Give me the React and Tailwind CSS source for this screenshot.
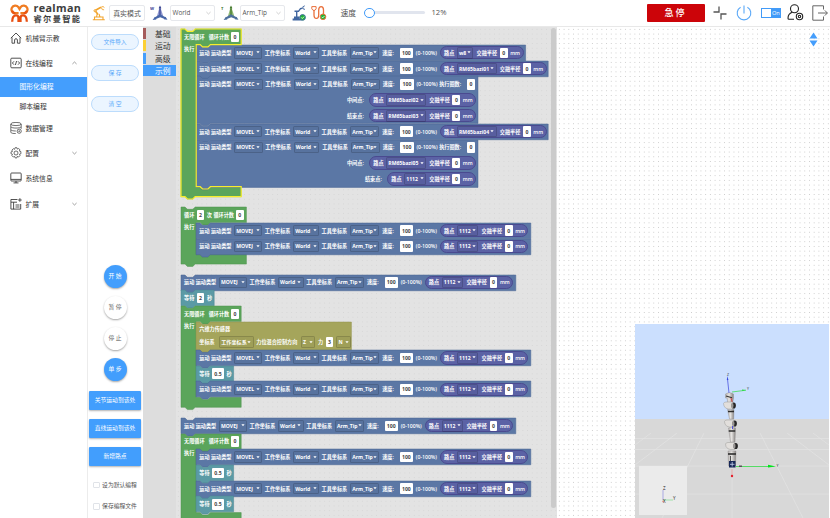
import React from "react";

const BLUE = "#5b77a5";
const GREEN = "#5ba55b";
const TEAL = "#5b9aa5";
const OLIVE = "#a5a55b";
const EDGE = { [BLUE]: "#486592", [GREEN]: "#4c924c", [TEAL]: "#4a8791", [OLIVE]: "#92924c" };
const ROW = 15.75;

const DIP = "l2.4 2.3h5.4l2.4 -2.3";
const DIP_BACK = "l-2.4 2.3h-5.4l-2.4 -2.3";

function Silhouette({ d, color, w, h }) {
  return (
    <svg className="absolute left-0 top-0 overflow-visible" width={w} height={h}>
      <path d={d} fill={color} stroke={EDGE[color]} strokeWidth="0.5" />
    </svg>
  );
}

/* ---- block fields ---- */
function T({ w, children }) {
  return <span className="block shrink-0 whitespace-nowrap" style={{ width: w }}>{children}</span>;
}
function Drop({ w, mr = 2.7, children }) {
  return (
    <span className="flex h-[11.5px] shrink-0 items-center justify-between rounded-[1.5px] border-[0.5px] border-black/15 bg-black/[0.03] pl-[1.2px] pr-[1.2px] text-[5.1px] font-bold" style={{ width: w, marginRight: mr }}>
      <span className="whitespace-nowrap">{children}</span>
      <svg className="shrink-0" width="4" height="3" viewBox="0 0 4 3"><path d="M.4 .3h3.2L2 2.3z" fill="#fff" /></svg>
    </span>
  );
}
function Num({ w = 7.6, mr = 2.6, children }) {
  return (
    <span className="flex h-[10.5px] shrink-0 items-center justify-center rounded-[1px] bg-white font-bold text-[#444]" style={{ width: w, marginRight: mr }}>
      {children}
    </span>
  );
}
function Point({ name, w, dw }) {
  return (
    <span className="flex h-[13.4px] shrink-0 items-center rounded-full border-[0.5px] border-[#4a4a90] bg-[#5b62a5] pl-[2.8px]" style={{ width: w }}>
      <T w={12.8}>路点</T>
      <Drop w={dw} mr={3.2}>{name}</Drop>
      <T w={23.2}>交融半径</T>
      <Num w={7.8} mr={2.6}>0</Num>
      <T w={10}>mm</T>
    </span>
  );
}

/* ---- blocks ---- */
function Statement({ w, h = ROW, color = BLUE, children }) {
  const d = `M0 0h4${DIP}H${w}V${h}H14.2${DIP_BACK}H0z`;
  return (
    <div className="relative shrink-0" style={{ width: w, height: h }}>
      <Silhouette d={d} color={color} w={w} h={h} />
      <div className="relative z-10">{children}</div>
    </div>
  );
}
function Line({ pl = 2.8, h = ROW, children }) {
  return <div className="flex items-center" style={{ paddingLeft: pl, height: h }}>{children}</div>;
}
function MoveFields({ type }) {
  const c = type === "MOVEC";
  return (
    <>
      <T w={11.6}>运动</T>
      <T w={23.1}>运动类型</T>
      <Drop w={c ? 28.6 : 28} mr={2.8}>{type}</Drop>
      <T w={28.2}>工作坐标系</T>
      <Drop w={25.8} mr={2.8}>World</Drop>
      <T w={28.4}>工具坐标系</T>
      <Drop w={29} mr={3.2}>Arm_Tip</Drop>
      <T w={17.6}>速度:</T>
      <Num w={13.3} mr={2.8}>100</Num>
    </>
  );
}
function Move({ type = "MOVEJ", name = "1112", dw = 21.6, pw = 88, w = 334.8 }) {
  return (
    <Statement w={w}>
      <Line>
        <MoveFields type={type} />
        <T w={24.4}>(0-100%)</T>
        <Point name={name} dw={dw} w={pw} />
      </Line>
    </Statement>
  );
}
function MoveC({ mid, end, short }) {
  return (
    <Statement w={282} h={47.4}>
      <Line>
        <MoveFields type="MOVEC" />
        <T w={22.8}>(0-100%)</T>
        <T w={28.1}>执行圈数:</T>
        <Num>0</Num>
      </Line>
      <Line pl={150.5}>
        <T w={22.5}>中间点:</T>
        <Point name={mid} dw={40} w={106.5} />
      </Line>
      <Line pl={short ? 168.5 : 150.5}>
        <T w={22.5}>结束点:</T>
        <Point name={end} dw={short ? 22 : 40} w={short ? 88.5 : 106.5} />
      </Line>
    </Statement>
  );
}
function Wait({ value, wide }) {
  return (
    <Statement w={wide ? 37.6 : 33.2} color={TEAL}>
      <Line>
        <T w={12.8}>等待</T>
        <Num w={wide ? 11.8 : 7.4}>{value}</Num>
        <T w={6}>秒</T>
      </Line>
    </Statement>
  );
}
function Force() {
  return (
    <Statement w={155.4} h={28.4} color={OLIVE}>
      <Line h={15}><T w={32}>六维力传感器</T></Line>
      <Line h={11}>
        <T w={19.8}>坐标系</T>
        <Drop w={34.6} mr={2.6}>工作坐标系</Drop>
        <T w={44.6}>力位混合控制方向</T>
        <Drop w={14} mr={3.2}>Z</Drop>
        <T w={7.6}>力</T>
        <Num w={7.6} mr={3}>3</Num>
        <Drop w={15}>N</Drop>
      </Line>
    </Statement>
  );
}
function Loop({ w = 60.2, inner, selected, header, children }) {
  const top = 15.6;
  const b = top + inner;
  const h = b + 10;
  const d = `M0 0h4${DIP}H${w}V${top}H29.4${DIP_BACK}H15.2V${b}h4${DIP}H${w}V${h}H14.2${DIP_BACK}H0z`;
  return (
    <div className="relative shrink-0" style={{ height: h }}>
      <Silhouette d={d} color={GREEN} w={w} h={h} />
      <div className="relative">
        <Line h={top}>{header}</Line>
        <div className="flex">
          <div className="w-[15.2px] shrink-0 pl-[2.8px]">执行</div>
          <div className="flex flex-col">{children}</div>
        </div>
      </div>
      {selected && (
        <svg className="absolute left-0 top-0 z-20 overflow-visible" width={w} height={h}>
          <path d={d} fill="none" stroke="#f7ee2b" strokeWidth="1.2" />
        </svg>
      )}
    </div>
  );
}
const ForeverHeader = () => (
  <>
    <T w={24.6}>无限循环</T>
    <T w={22.4}>循环计数</T>
    <Num>0</Num>
  </>
);

function Stack({ y, children }) {
  return <div className="absolute left-[5.3px] flex flex-col" style={{ top: y }}>{children}</div>;
}

function Workspace() {
  return (
    <div className="relative w-[381px] shrink-0 overflow-hidden bg-[#e3e3e3] bg-[radial-gradient(circle,#d6d6d6_0.6px,transparent_0.9px)] bg-[size:4.73px_4.73px] font-['Open_Sans','Noto_Sans_CJK_SC',sans-serif] text-[5.15px] font-semibold leading-[8px] text-white">
      <Stack y={2.8}>
        <Loop inner={142.1} selected header={<ForeverHeader />}>
          <Move name="w8" dw={16.6} pw={83.5} w={329.6} />
          <Move type="MOVEL" name="RM65bazi01" dw={39.8} pw={106.5} w={352.2} />
          <MoveC mid="RM65bazi02" end="RM65bazi03" />
          <Move type="MOVEL" name="RM65bazi04" dw={39.8} pw={106.5} w={352.2} />
          <MoveC mid="RM65bazi05" end="1112" short />
        </Loop>
      </Stack>
      <Stack y={180.7}>
        <Loop w={65.4} inner={31.5} header={<><T w={12.7}>循环</T><Num w={7.4}>2</Num><T w={6.7}>次</T><T w={22.6}>循环计数</T><Num>0</Num></>}>
          <Move />
          <Move />
        </Loop>
      </Stack>
      <Stack y={248}>
        <Move />
        <Wait value="2" />
        <Loop inner={75.7} header={<ForeverHeader />}>
          <Force />
          <Move type="MOVEL" />
          <Wait value="0.5" wide />
          <Move type="MOVEL" />
        </Loop>
      </Stack>
      <Stack y={391.4}>
        <Move />
        <Loop inner={63} header={<ForeverHeader />}>
          <Move type="MOVEL" />
          <Wait value="0.5" wide />
          <Move />
          <Wait value="0.5" wide />
        </Loop>
      </Stack>
      <div className="absolute right-[1.5px] top-[1px] h-[480px] w-[5px] rounded-full bg-[#cbcbcb]" />
    </div>
  );
}

/* ---- header ---- */
function Logo() {
  return (
    <div className="flex w-[80px] shrink-0 items-center pl-[10px]">
      <svg className="shrink-0" width="19" height="20" viewBox="0 0 19 20" fill="none" strokeWidth="2.3">
        <path d="M8.6 10.2H5.4A3.8 3.8 0 1 1 8.4 4.2L9.5 6l1.1-1.8a3.8 3.8 0 1 1 3 6h-3.2" stroke="#f07c22" />
        <path d="M2.2 7.6c.2 1.7 1.5 2.8 3.2 2.8M16.8 7.6c-.2 1.7-1.5 2.8-3.2 2.8" stroke="#e95513" />
        <path d="M2.2 18.8c0-4.5 1.4-6.4 3.9-6.4 1.6 0 2.4 1.2 2.4 2.6v4M16.8 18.8c0-4.5-1.4-6.4-3.9-6.4-1.6 0-2.4 1.2-2.4 2.6v4" stroke="#e84e10" />
      </svg>
      <div className="ml-[4.5px] flex flex-col text-[#3d3d3d]">
        <span className="whitespace-nowrap font-['Open_Sans',sans-serif] text-[10.8px] font-bold leading-[10.5px] tracking-[0.35px]">realman</span>
        <span className="whitespace-nowrap text-[8.2px] font-bold leading-[10px] tracking-[1.4px]">睿尔曼智能</span>
      </div>
    </div>
  );
}
function Chevron({ up, className = "" }) {
  return (
    <svg className={className} width="5" height="4" viewBox="0 0 5 4" fill="none" strokeWidth=".7" stroke="currentColor">
      <path d={up ? "M.4 3l2.1-2 2.1 2" : "M.4 1l2.1 2 2.1-2"} />
    </svg>
  );
}
function Select({ children }) {
  return (
    <div className="flex h-[16px] w-[44.5px] shrink-0 items-center justify-between rounded-[2px] border border-[#e6e8ec] pl-[1.5px] pr-[3px] font-['Open_Sans',sans-serif] text-[6.4px] text-[#555]">
      <span>{children}</span>
      <Chevron className="text-[#bbb]" />
    </div>
  );
}
function Frame({ letter, dark, mid, light }) {
  return (
    <svg className="shrink-0" width="18" height="16" viewBox="0 0 18 16">
      <text x="0" y="4.6" fontSize="4.2" fontWeight="700" fill={dark} fontFamily="Open Sans, sans-serif">{letter}</text>
      <path d="M9.2 3.5h1.6l2.4 7.500-3.200 1.200L7 11z" fill={light} />
      <path d="M9.4 3h1.200v8.500H9.400z" fill={dark} />
      <path d="M10 9.200l-5.500 3.200.8 1.800 4.900-2 5 2 .8-1.800z" fill={mid} />
      <path d="M10 .4l1.400 2.800H8.600z" fill={dark} />
      <path d="M5 11.800L2.600 15l3.800-.5zM15.500 11.800l2 3-3.700-.6z" fill={mid} />
    </svg>
  );
}
function Check({ cx, cy }) {
  return (
    <g>
      <circle cx={cx} cy={cy} r="2.8" fill="#1fb534" />
      <path d={`M${cx - 1.4} ${cy}l1.1 1.1 1.8-1.9`} stroke="#fff" strokeWidth=".8" fill="none" />
    </g>
  );
}
function Header() {
  return (
    <header className="flex h-[26.5px] shrink-0 items-center border-b border-[#e8e8e8] bg-white">
      <Logo />
      <svg className="ml-[11.5px] shrink-0" width="14" height="16" viewBox="0 0 14 16" fill="none" stroke="#f2a42c">
        <path d="M.8 14.8h12M2.5 12H11v2.800H2.500zM4.500 12l.7-3M8 12l-1-3" strokeWidth="1.1" />
        <path d="M6 9.500L3 5.600l6-3.400" strokeWidth="1.700" />
        <path d="M9 2.300l2-.8 1.400 1M9.600 3l.7 1.600 1.800.2" strokeWidth=".9" />
        <circle cx="3" cy="5.800" r="1" fill="#fff" />
      </svg>
      <div className="ml-[3.5px] flex h-[16px] w-[36px] shrink-0 items-center justify-center whitespace-nowrap rounded-[2px] border border-[#e6e8ec] text-[6.9px] text-[#555]">真实模式</div>
      <div className="ml-[5px] flex items-center"><Frame letter="W" dark="#35408f" mid="#4766a8" light="#8f97cf" /></div>
      <div className="ml-[2px]"><Select>World</Select></div>
      <div className="ml-[6px] flex items-center"><Frame letter="T" dark="#3f7426" mid="#4d6f9c" light="#8fb873" /></div>
      <div className="ml-[1.5px]"><Select>Arm_Tip</Select></div>
      <svg className="ml-[7px] shrink-0" width="14" height="16" viewBox="0 0 14 16" fill="none" stroke="#4166a0">
        <path d="M.6 14.500h9M2 12.500h5.500" strokeWidth="1.800" />
        <path d="M4.700 12V6M2.500 6.300h4l2-2.700 2-.4" strokeWidth="1.400" />
        <path d="M12.800.8l-2 1 .2 2 2 .6" strokeWidth=".9" />
        <Check cx={10.6} cy={12.4} />
      </svg>
      <svg className="ml-[5px] shrink-0" width="16" height="16" viewBox="0 0 16 16" fill="none" stroke="#e9703c">
        <path d="M3 5.300v4.400c0 5 4.700 5 4.700 0V5c0-4.600 4.800-4.600 4.800 0v5.500" strokeWidth="1.300" />
        <path d="M.8 1.600h4.300v2.200L4 5.300H2L.8 3.800z" strokeWidth="1" />
        <Check cx={12} cy={11.8} />
      </svg>
      <span className="ml-[14px] w-[23px] shrink-0 whitespace-nowrap text-[7.8px] text-[#555]">速度</span>
      <div className="relative flex h-[12px] w-[61px] shrink-0 items-center">
        <div className="h-[2.6px] w-full rounded-full bg-[#e1e5ee]" />
        <div className="absolute left-[0.8px] top-[0.8px] h-[10.4px] w-[10.4px] rounded-full border border-[#419bf9] bg-white" />
      </div>
      <span className="ml-[7px] w-[20px] shrink-0 font-['Open_Sans',sans-serif] text-[7.6px] text-[#555]">12%</span>
      <div className="ml-auto flex shrink-0 items-center">
        <div className="flex h-[17.5px] w-[58px] items-center justify-center rounded-[1px] bg-[#cc0409] text-[9px] font-medium tracking-[2px] text-white">急停</div>
        <svg className="ml-[8px]" width="14" height="14" viewBox="0 0 14 14" fill="none" stroke="#555" strokeWidth="1.3">
          <path d="M6 .5v5.500H.5M13.500 8H8v5.500" />
        </svg>
        <svg className="ml-[9.5px]" width="16" height="16" viewBox="0 0 16 16" fill="none" stroke="#5aa8f7" strokeWidth="1.1">
          <path d="M8 .4v8M4.600 2.200a6.800 6.800 0 1 0 6.800 0" />
        </svg>
        <div className="ml-[9px] flex h-[10px] w-[20px] items-center bg-[#429bf8] p-[1px] font-['Open_Sans',sans-serif] text-[5.6px] text-white">
          <span className="h-[8px] w-[8.5px] bg-white" />
          <span className="ml-[1.5px] leading-[8px]">On</span>
        </div>
        <svg className="ml-[6px]" width="17" height="17" viewBox="0 0 17 17" fill="none" stroke="#222" strokeWidth="1.1">
          <circle cx="7.5" cy="4.7" r="4" />
          <path d="M5.200 8.300C2.600 9.300 1 11.400 1 14.300c0 .7.400 1 1 1h5" />
          <circle cx="12.5" cy="12.5" r="3.2" />
          <circle cx="12.5" cy="12.5" r="1.2" />
        </svg>
        <svg className="ml-[8px] mr-[2px]" width="16" height="16" viewBox="0 0 16 16" fill="none" stroke="#666" strokeWidth="1">
          <path d="M11.500 4.500V.8H.8v14.400h10.700v-3.700M6 8h9.300M12.800 5.400L15.400 8l-2.600 2.600" />
        </svg>
      </div>
    </header>
  );
}

/* ---- sidebar ---- */
const icons = {
  home: <path d="M.8 6.200L6 1l5.200 5.200M2 5.400v5.800h2.600V8c0-1.800 2.800-1.800 2.800 0v3.200H10V5.400" />,
  code: <><rect x=".8" y="1.200" width="10.400" height="9.600" rx="1" /><path d="M4 4.300L2.400 6 4 7.700M8 4.300L9.600 6 8 7.700M6.600 4L5.400 8" /></>,
  data: <><ellipse cx="6" cy="2" rx="5.200" ry="1.600" /><path d="M.8 2v2.500c0 2.100 10.400 2.100 10.400 0V2M.8 4.800v2.700c0 1 2.500 1.500 5 1.500M11.200 4.800v2M.8 7.800v2.400c0 1 2.500 1.400 5 1.400" /><circle cx="9.200" cy="9.200" r="2.100" /><circle cx="9.200" cy="9.200" r=".5" /></>,
  gear: <><circle cx="6" cy="6" r="2" /><path d="M5.100.7h1.800l.4 1.400 1.300-.6 1.400 1.300-.6 1.300 1.500.5v2.200l-1.500.5.6 1.300-1.400 1.400-1.300-.6-.4 1.500H5.100l-.5-1.500-1.300.6-1.400-1.400.6-1.300L1 6.800V4.900l1.500-.5-.6-1.300 1.400-1.400 1.300.6z" /></>,
  monitor: <><rect x=".8" y="1" width="10.400" height="8" rx=".8" /><path d="M1 7.400h10M3.500 10.900h5M6 9v2" /></>,
  extend: <><path d="M7.500 1.500H.9v9.600h9.800V6M1 4.200h6M3.600 4.200v7M5.500 7h4M5.500 9h4" /><path d="M9.900.2v3.600M8.100 2h3.600" /></>,
};
function NavItem({ icon, label, arrow, h = "h-[25.2px]" }) {
  return (
    <div className={`flex shrink-0 items-center pl-[9.5px] pr-[10px] ${h}`}>
      <svg width="12" height="12" viewBox="0 0 12 12" fill="none" stroke="#333" strokeWidth={icon === "data" || icon === "gear" ? 0.7 : 0.85}>{icons[icon]}</svg>
      <span className="ml-[4px] whitespace-nowrap">{label}</span>
      {arrow && <Chevron up={arrow === "up"} className="ml-auto text-[#777]" />}
    </div>
  );
}
function Sidebar() {
  return (
    <nav className="flex w-[87.5px] shrink-0 flex-col border-r border-[#ececec] bg-white text-[6.8px] text-[#333]">
      <NavItem icon="home" label="机械臂示教" h="h-[23.5px]" />
      <NavItem icon="code" label="在线编程" arrow="up" h="h-[26.5px]" />
      <div className="flex h-[20px] shrink-0 items-center bg-[#449efd] pl-[19.5px] text-white">图形化编程</div>
      <div className="flex h-[19px] shrink-0 items-center pl-[19.5px]">脚本编程</div>
      <NavItem icon="data" label="数据管理" />
      <NavItem icon="gear" label="配置" arrow="down" />
      <NavItem icon="monitor" label="系统信息" />
      <NavItem icon="extend" label="扩展" arrow="down" />
    </nav>
  );
}

/* ---- run controls ---- */
function Controls() {
  return (
    <div className="flex w-[55px] shrink-0 flex-col items-center bg-white text-[5.8px]">
      <div className="mt-[7.5px] flex flex-col gap-[15px]">
        {["文件导入", "保 存", "清 空"].map((t) => (
          <div key={t} className="flex h-[16px] w-[48.5px] items-center justify-center whitespace-nowrap rounded-full border border-[#bcdcfc] bg-[#ebf5ff] text-[#5aa9fa]">{t}</div>
        ))}
      </div>
      <div className="mt-[153px] flex flex-col gap-[8px]">
        {["开 始", "暂 停", "停 止", "单 步"].map((t, i) => (
          <div key={t} className={`flex h-[23px] w-[23px] items-center justify-center whitespace-nowrap rounded-full shadow-[0_1px_2px_rgba(0,0,0,0.35)] ${i === 0 || i === 3 ? "bg-[#429efd] text-white" : "bg-white text-[#666]"}`}>{t}</div>
        ))}
      </div>
      <div className="mt-[9.5px] flex flex-col gap-[9.2px]">
        {["关节运动到该处", "直线运动到该处", "新增路点"].map((t) => (
          <div key={t} className="flex h-[19px] w-[52px] items-center justify-center whitespace-nowrap rounded-[1px] bg-[#429efd] text-white shadow-[0_1px_2px_rgba(0,0,0,0.3)]">{t}</div>
        ))}
      </div>
      <div className="mt-[14px] flex flex-col gap-[11.5px]">
        {["设为默认编程", "保存编程文件"].map((t) => (
          <div key={t} className="flex h-[10px] items-center gap-[2.5px] whitespace-nowrap text-[#555]">
            <span className="h-[6.5px] w-[6.5px] rounded-[1px] border border-[#e0e3e8]" />{t}
          </div>
        ))}
      </div>
    </div>
  );
}

function Toolbox() {
  const rows = [["基础", "bg-[#a55b5b]"], ["运动", "bg-[#fcd034]"], ["高级", "bg-[#459efc]"], ["示例", "bg-[#459efc]"]];
  return (
    <div className="flex w-[33.5px] shrink-0 flex-col gap-[1.2px] bg-[#ddd] pt-[1.8px] text-[7.8px] leading-[11px] text-[#333]">
      {rows.map(([t, c], i) => (
        <div key={t} className={`flex h-[11px] shrink-0 ${i === 3 ? "bg-[#459efc] text-white" : ""}`}>
          <span className={`h-full w-[3.5px] ${c}`} />
          <span className="ml-[9px] whitespace-nowrap">{t}</span>
        </div>
      ))}
    </div>
  );
}

/* ---- 3D preview ---- */
function Joint({ x, y }) {
  return (
    <g>
      <path d={`M${x - 6} ${y - 2}q.5-1.5 2.5-1.5h7v7h-4.500q-3 0-4.500-3z`} fill="#e2dfdc" stroke="#8c8a88" strokeWidth=".4" />
      <ellipse cx={x + 4.2} cy={y} rx="2.2" ry="3.1" fill="#262626" />
      <ellipse cx={x + 2.8} cy={y} rx="1.2" ry="2.8" fill="#9b9896" />
    </g>
  );
}
function Link({ d }) {
  return <path d={d} fill="url(#arm)" stroke="#8f8c8a" strokeWidth=".4" />;
}
function Scene() {
  return (
    <svg className="block" width="194" height="194" viewBox="0 0 194 194">
      <defs>
        <linearGradient id="arm">
          <stop offset="0" stopColor="#b5b2b0" />
          <stop offset=".45" stopColor="#e6e4e2" />
          <stop offset="1" stopColor="#858280" />
        </linearGradient>
      </defs>
      <rect width="194" height="95" fill="#cbdffe" />
      <rect y="95" width="194" height="99" fill="#d8d8d8" />
      <g stroke="#e6e6e6" strokeWidth=".6" fill="none">
        <path d="M0 114.500h194M0 125.500h194M0 142h194M0 170h194M16 109L0 121M42 109L0 141M69 109L27 194M97 109v85M125 109l43 85M152 109l42 32M178 109l16 12" />
      </g>
      <rect x="4" y="142" width="48" height="49" fill="#ebebeb" />
      <g strokeWidth=".7" fontSize="4.5" fontFamily="Open Sans, sans-serif" fill="#222">
        <path d="M28 176V166" stroke="#8d8de0" /><path d="M28 176h10" stroke="#7fdc8c" />
        <path d="M27 177l2 1" stroke="#d66" />
        <text x="28" y="165.5">Z</text><text x="38" y="175.5">Y</text><text x="28" y="179">X</text>
      </g>
      <g fontSize="3.5" fontFamily="Open Sans, sans-serif" fill="#333">
        <Link d="M90.500 70q3.500-2.800 8 0v4l-1 6h-4.500l-1-6h-1.500z" />
        <path d="M91 72l6 1.800" stroke="#333" strokeWidth="1.100" />
        <path d="M96 74l1.500 5" stroke="#d44" strokeWidth="1" />
        <Joint x={94.5} y={81.5} />
        <Link d="M92.500 85.500h6.500l-.3 9.500h-4.200z" />
        <path d="M93 87.500h6" stroke="#2d2d2d" strokeWidth="1.500" />
        <Joint x={95.5} y={99.5} />
        <Link d="M93.500 104q3.500-1.500 7 0l-.5 14h-4.500z" />
        <path d="M93.700 107h6.500" stroke="#2d2d2d" strokeWidth="1.500" /><path d="M97.500 102v3" stroke="#5552d8" />
        <Joint x={96.5} y={122} />
        <Link d="M93 127h8l-.5 15h-7z" />
        <path d="M93 130h8" stroke="#2d2d2d" strokeWidth="1.600" />
        <path d="M95.500 132v6" stroke="#333" strokeWidth=".8" />
        <path d="M94 69L92.500 55" stroke="#4b55e0" strokeWidth=".8" /><path d="M91.800 56l.6-4 1 4z" fill="#3345e0" />
        <path d="M97 68l14-1.800" stroke="#42dc58" strokeWidth=".8" /><path d="M107 65.500l4 .4-3.700 1.200z" fill="#25d840" />
        <text x="92" y="51.5">Z</text><text x="112" y="66">Y</text>
        <rect x="94" y="137" width="6.5" height="6.5" fill="#172858" /><path d="M95 140.300h4.500M97.200 138v4.500" stroke="#ccd5f5" strokeWidth=".8" />
        <path d="M101 142.500h33" stroke="#32db46" strokeWidth=".8" /><path d="M133 140.800l8 1.700-8 1z" fill="#00e31b" />
        <rect x="104" y="141.500" width="3" height="1.500" fill="#555" />
        <path d="M97 145v6" stroke="#e69292" strokeWidth=".7" /><circle cx="97" cy="152" r="1.2" fill="#e51f2c" />
        <text x="141.5" y="142.5">Y</text>
      </g>
    </svg>
  );
}

export default function App() {
  return (
    <div className="flex h-[518px] w-[830px] flex-col overflow-hidden bg-white font-['Noto_Sans_CJK_SC',sans-serif]">
      <Header />
      <main className="flex min-h-0 flex-1">
        <Sidebar />
        <Controls />
        <Toolbox />
        <Workspace />
        <div className="flex flex-1 flex-col items-end justify-between bg-white bg-[radial-gradient(circle,#ccc_0.6px,transparent_0.9px)] bg-[size:4.73px_4.73px] pr-[1px]">
          <svg className="mr-[11px] mt-[5px]" width="9" height="15" viewBox="0 0 9 15" fill="#459efc">
            <path d="M4.500.5l4 6H.5zM4.500 14.500l4-6H.5z" />
          </svg>
          <Scene />
        </div>
      </main>
    </div>
  );
}
